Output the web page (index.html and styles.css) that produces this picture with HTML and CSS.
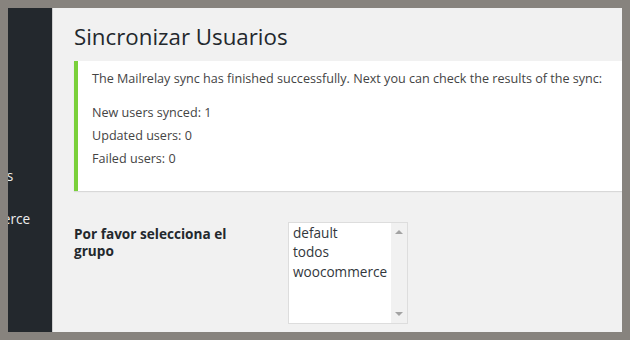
FILE: index.html
```html
<!DOCTYPE html>
<html lang="es">
<head>
<meta charset="utf-8">
<title>Sincronizar Usuarios</title>
<link rel="stylesheet" href="styles.css">
</head>
<body>
<div class="frame">
  <nav class="sidebar">
    <ul class="menu">
      <li class="menu-item">Comentarios</li>
      <li class="menu-item">WooCommerce</li>
    </ul>
  </nav>
  <main class="main">
    <h1 class="title">Sincronizar Usuarios</h1>
    <div class="notice">
      <p class="notice-msg">The Mailrelay sync has finished successfully. Next you can check the results of the sync:</p>
      <ul class="results">
        <li>New users synced: 1</li>
        <li>Updated users: 0</li>
        <li>Failed users: 0</li>
      </ul>
    </div>
    <div class="form-row">
      <div class="form-label">Por favor selecciona el grupo</div>
      <div class="listbox">
        <ul class="options">
          <li>default</li>
          <li>todos</li>
          <li>woocommerce</li>
        </ul>
        <div class="scrollbar">
          <span class="arrow arrow-up"></span>
          <span class="arrow arrow-down"></span>
        </div>
      </div>
    </div>
  </main>
</div>
</body>
</html>
```

FILE: styles.css
```css
html {
  background: #87837e;
}
body {
  margin: 8px;
  font-family: "Open Sans", "DejaVu Sans", sans-serif;
}
.frame {
  width: 614px;
  height: 324px;
  overflow: hidden;
  display: flex;
  background: #f1f1f1;
}
.sidebar {
  width: 44px;
  flex: none;
  background: #23282d;
  border-right: 1px solid #cfcfcf;
  overflow: hidden;
}
.menu {
  list-style: none;
  margin: 0 0 0 -76px;
  padding: 159px 0 0;
  display: flex;
  flex-direction: column;
  gap: 25px;
  white-space: nowrap;
}
.menu-item {
  font-size: 13.6px;
  line-height: 18px;
  color: #eeeeee;
}
.main {
  flex: 1;
  min-width: 0;
  padding: 14px 0 0 21px;
}
.title {
  margin: 0;
  font-size: 22.3px;
  font-weight: 400;
  line-height: 30px;
  color: #23282d;
}
.notice {
  margin-top: 9px;
  background: #fff;
  border-left: 4px solid #7ad03a;
  box-shadow: 0 1px 1px rgba(0, 0, 0, 0.1);
  padding: 8px 14px 21px;
  color: #444;
  font-size: 12.6px;
  white-space: nowrap;
}
.notice-msg {
  margin: 0;
  line-height: 19.5px;
}
.results {
  list-style: none;
  margin: 12px 0 0;
  padding: 0;
  line-height: 23px;
}
.form-row {
  margin-top: 31px;
  display: flex;
}
.form-label {
  width: 170px;
  margin-right: 44px;
  flex: none;
  padding-top: 3px;
  font-size: 13.6px;
  font-weight: 700;
  line-height: 17px;
  color: #23282d;
}
.listbox {
  width: 118px;
  height: 100px;
  border: 1px solid #dddddd;
  background: #fff;
  display: flex;
}
.options {
  flex: 1;
  list-style: none;
  margin: 0;
  padding: 0 0 0 4px;
  font-size: 13.6px;
  line-height: 19.5px;
  color: #32373c;
}
.scrollbar {
  width: 16px;
  background: #f1f1f1;
  display: flex;
  flex-direction: column;
  justify-content: space-between;
  align-items: center;
  padding: 7px 0 7px;
}
.arrow {
  width: 0;
  height: 0;
  border-left: 4px solid transparent;
  border-right: 4px solid transparent;
}
.arrow-up {
  border-bottom: 4px solid #a3a3a3;
}
.arrow-down {
  border-top: 4px solid #a3a3a3;
}
```
